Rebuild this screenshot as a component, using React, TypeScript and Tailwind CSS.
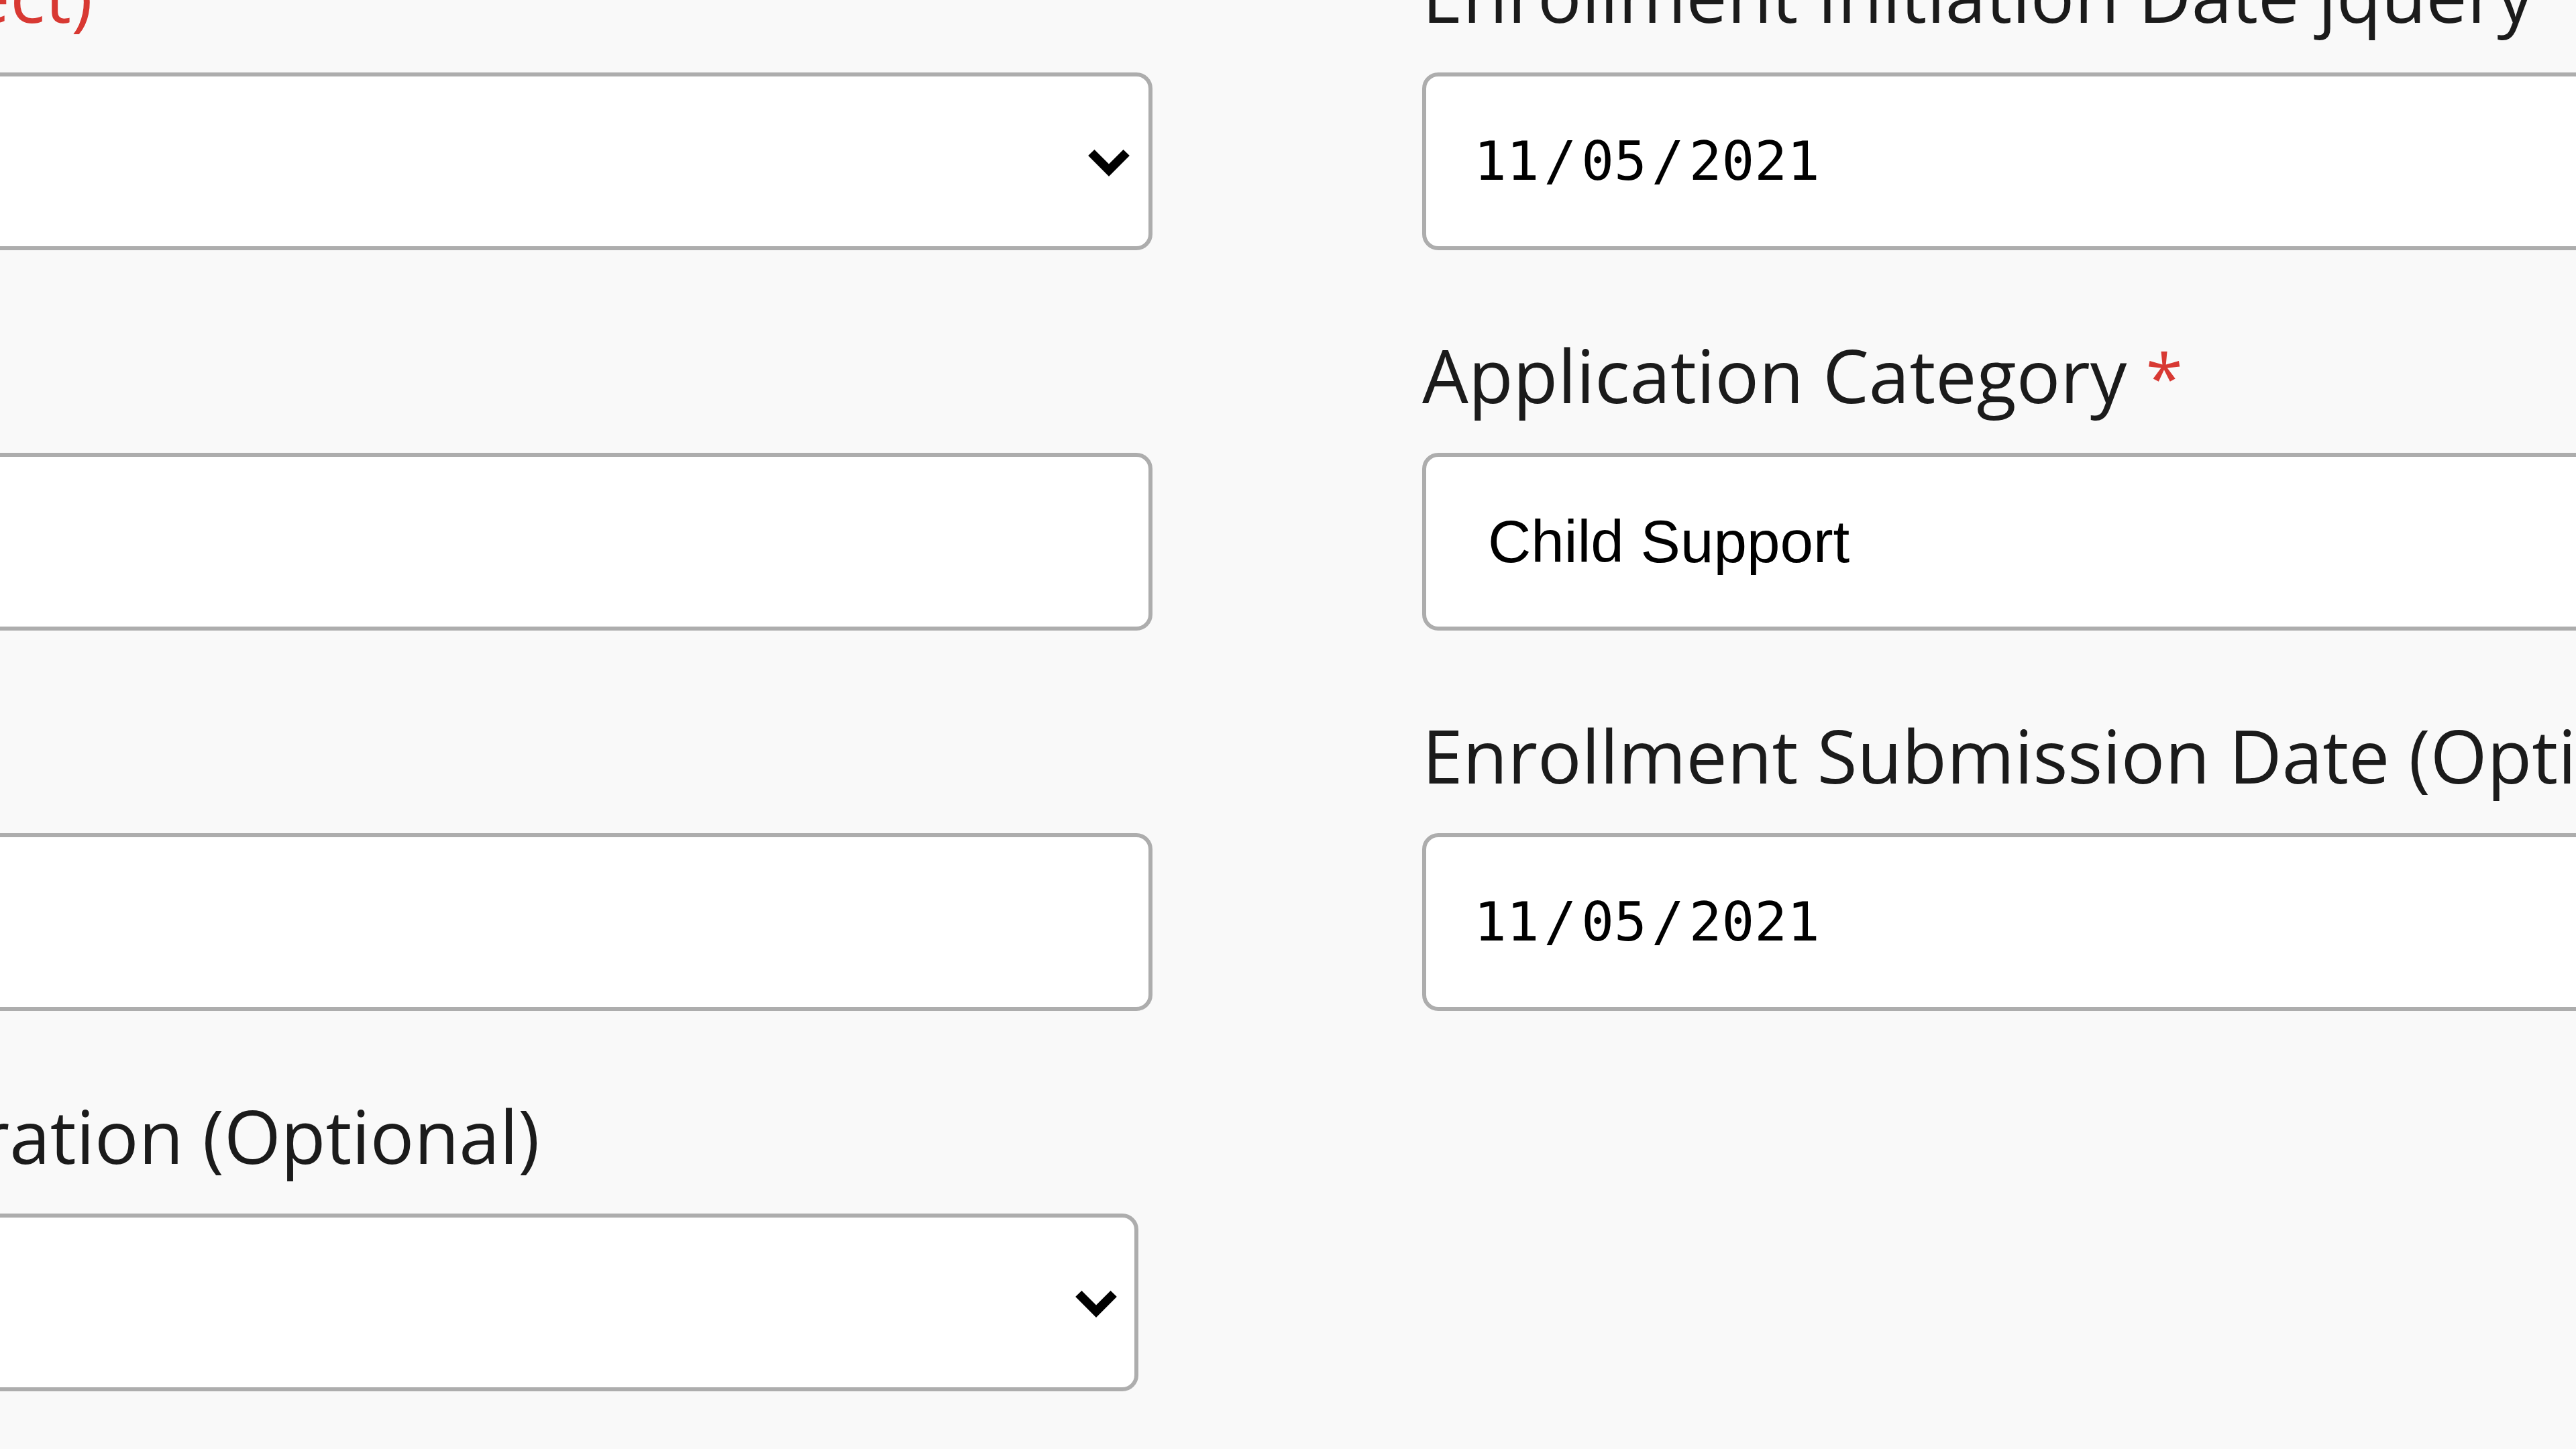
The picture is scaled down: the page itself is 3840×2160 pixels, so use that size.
import React from "react";

const Chevron = () => (
  <svg width="62" height="40" viewBox="0 0 61.7 40" className="shrink-0">
    <polygon points="0,9 9.3,0 30.85,21.6 52.4,0 61.7,9 30.85,40" fill="#000" />
  </svg>
);

const Field = ({
  label,
  children,
  labelClass = "",
}: {
  label: React.ReactNode;
  children: React.ReactNode;
  labelClass?: string;
}) => (
  <div className="flex flex-col">
    <div
      className={
        "h-[109px] mb-[62px] whitespace-nowrap text-[109px] leading-[109px] text-[#1b1b1b] font-['Open_Sans',sans-serif] " +
        labelClass
      }
    >
      {label}
    </div>
    {children}
  </div>
);

const boxBase =
  "h-[265px] bg-white border-[6px] border-[#adadad] rounded-[24px] flex items-center";

const SelectBox = ({ narrow }: { narrow?: boolean }) => (
  <div
    className={
      narrow
        ? boxBase + " w-[2469px] justify-end pr-[26px]"
        : boxBase + " w-full justify-end pr-[28px]"
    }
  >
    <div className="mt-[5px]">
      <Chevron />
    </div>
  </div>
);

const TextBox = () => <div className={boxBase + " w-full"} />;

const DateBox = ({ mm, dd, yyyy }: { mm: string; dd: string; yyyy: string }) => (
  <div className={boxBase + " w-full"}>
    <span className="pl-[71px] text-[81px] text-black font-['DejaVu_Sans_Mono',monospace] whitespace-nowrap">
      {mm}
      <span className="mx-[7px]">/</span>
      {dd}
      <span className="mx-[7px]">/</span>
      {yyyy}
    </span>
  </div>
);

const ValueBox = ({ value }: { value: string }) => (
  <div className={boxBase + " w-full"}>
    <span className="pl-[92px] text-[89px] text-black font-['Liberation_Sans',Arial,sans-serif] whitespace-nowrap">
      {value}
    </span>
  </div>
);

export default function App() {
  return (
    <div className="w-[3840px] h-[2160px] overflow-hidden bg-[#f9f9f9]">
      <div className="flex gap-[402px] ml-[-772px] mt-[-63px]">
        <div className="w-[2490px] shrink-0 flex flex-col gap-[131px]">
          <Field
            labelClass="ml-[24px]"
            label={
              <>
                Programs <span className="text-[#d83933]">(Select)</span>
              </>
            }
          >
            <SelectBox />
          </Field>
          <Field label={<>&nbsp;</>}>
            <TextBox />
          </Field>
          <Field label={<>&nbsp;</>}>
            <TextBox />
          </Field>
          <Field labelClass="ml-[7px]" label="Enrollment Duration (Optional)">
            <SelectBox narrow />
          </Field>
        </div>
        <div className="w-[2000px] shrink-0 flex flex-col gap-[131px]">
          <Field label="Enrollment Initiation Date jquery">
            <DateBox mm="11" dd="05" yyyy="2021" />
          </Field>
          <Field
            label={
              <>
                Application Category{" "}
                <span className="text-[100px] text-[#d83933]">*</span>
              </>
            }
          >
            <ValueBox value="Child Support" />
          </Field>
          <Field label="Enrollment Submission Date (Optional)">
            <DateBox mm="11" dd="05" yyyy="2021" />
          </Field>
        </div>
      </div>
    </div>
  );
}
